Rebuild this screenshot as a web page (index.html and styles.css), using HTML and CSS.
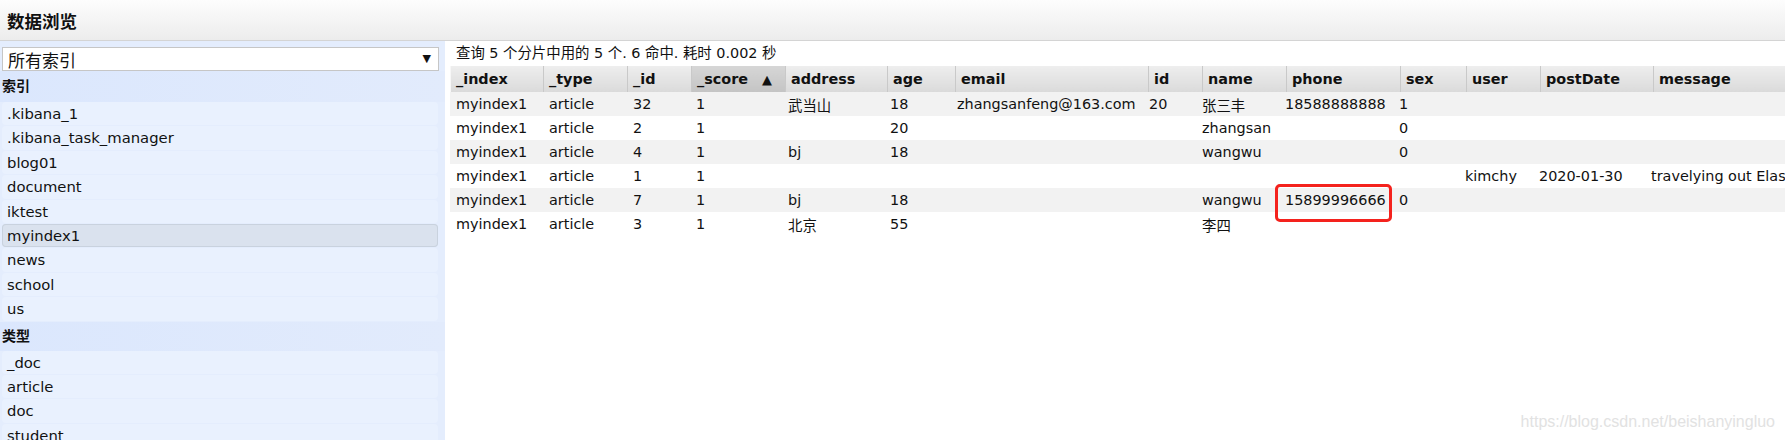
FILE: index.html
```html
<!DOCTYPE html>
<html lang="zh-CN">
<head>
  <meta charset="UTF-8">
  <title>数据浏览</title>
  <link rel="stylesheet" href="styles.css">
</head>
<body>
<div class="top">
  <h1 class="title">数据浏览</h1>
</div>
<div class="page">
  <div class="side">
    <div class="pick"><span class="pickText">所有索引</span><span class="pickArrow">&#9660;</span></div>
    <div class="group first">索引</div>
    <ul class="list">
      <li>.kibana_1</li>
      <li>.kibana_task_manager</li>
      <li>blog01</li>
      <li>document</li>
      <li>iktest</li>
      <li class="on">myindex1</li>
      <li>news</li>
      <li>school</li>
      <li>us</li>
    </ul>
    <div class="group">类型</div>
    <ul class="list">
      <li>_doc</li>
      <li>article</li>
      <li>doc</li>
      <li>student</li>
    </ul>
  </div>
  <div class="main">
    <p class="info">查询 5 个分片中用的 5 个. 6 命中. 耗时 0.002 秒</p>
    <table class="results head">
      <colgroup>
        <col style="width:93px"><col style="width:84px"><col style="width:64px"><col style="width:94px">
        <col style="width:102px"><col style="width:68px"><col style="width:193px"><col style="width:54px">
        <col style="width:84px"><col style="width:114px"><col style="width:66px"><col style="width:74px">
        <col style="width:113px"><col style="width:320px">
      </colgroup>
      <tr>
        <th>_index</th><th>_type</th><th>_id</th><th class="sorted">_score<span class="arrow">&#9650;</span></th>
        <th>address</th><th>age</th><th>email</th><th>id</th><th>name</th><th>phone</th>
        <th>sex</th><th>user</th><th>postDate</th><th>message</th>
      </tr>
    </table>
    <table class="results body">
      <colgroup>
        <col style="width:93px"><col style="width:84px"><col style="width:63px"><col style="width:92px">
        <col style="width:102px"><col style="width:67px"><col style="width:192px"><col style="width:53px">
        <col style="width:83px"><col style="width:114px"><col style="width:66px"><col style="width:74px">
        <col style="width:112px"><col style="width:320px">
      </colgroup>
      <tr>
        <td>myindex1</td><td>article</td><td>32</td><td>1</td><td>武当山</td><td>18</td>
        <td>zhangsanfeng@163.com</td><td>20</td><td>张三丰</td><td>18588888888</td><td>1</td><td></td><td></td><td></td>
      </tr>
      <tr>
        <td>myindex1</td><td>article</td><td>2</td><td>1</td><td></td><td>20</td>
        <td></td><td></td><td>zhangsan</td><td></td><td>0</td><td></td><td></td><td></td>
      </tr>
      <tr>
        <td>myindex1</td><td>article</td><td>4</td><td>1</td><td>bj</td><td>18</td>
        <td></td><td></td><td>wangwu</td><td></td><td>0</td><td></td><td></td><td></td>
      </tr>
      <tr>
        <td>myindex1</td><td>article</td><td>1</td><td>1</td><td></td><td></td>
        <td></td><td></td><td></td><td></td><td></td><td>kimchy</td><td>2020-01-30</td><td>travelying out Elas</td>
      </tr>
      <tr>
        <td>myindex1</td><td>article</td><td>7</td><td>1</td><td>bj</td><td>18</td>
        <td></td><td></td><td>wangwu</td><td class="marked">15899996666<span class="mark"></span></td><td>0</td><td></td><td></td><td></td>
      </tr>
      <tr>
        <td>myindex1</td><td>article</td><td>3</td><td>1</td><td>北京</td><td>55</td>
        <td></td><td></td><td>李四</td><td></td><td></td><td></td><td></td><td></td>
      </tr>
    </table>
  </div>
</div>
<div class="stamp">https://blog.csdn.net/beishanyingluo</div>
</body>
</html>
```

FILE: styles.css
```css
html, body { margin: 0; padding: 0; }
body {
  width: 1785px;
  height: 440px;
  overflow: hidden;
  font: 14.4px "DejaVu Sans", "Noto Sans CJK SC", sans-serif;
  color: #111;
  background: #fff;
  position: relative;
}

.top {
  height: 40px;
  border-bottom: 1px solid #d4d4d4;
  background: linear-gradient(#fdfdfd, #ececec);
  display: flex;
  align-items: center;
  padding-left: 7px;
}
.title { margin: 0; font-size: 17.5px; font-weight: bold; color: #111; }

.page { display: flex; height: 399px; }

/* left column */
.side {
  width: 443px;
  padding: 6px 0 0 2px;
  background: #e4edfd;
  flex: none;
}
.pick {
  height: 22px;
  width: 430px;
  border: 1px solid #c6c6c6;
  background: #fff;
  padding-left: 5px;
  position: relative;
  overflow: hidden;
}
.pickText { display: block; font-size: 17px; line-height: 17px; padding-top: 5px; }
.pickArrow { position: absolute; right: 7px; top: 0; font-size: 11px; line-height: 22px; }
.group {
  height: 29px;
  line-height: 29px;
  margin-left: -2px;
  padding-left: 2px;
  font-weight: bold;
  font-size: 14px;
  background: linear-gradient(90deg, #dbe7fd, #e2ebfc);
}
.group.first { height: 31px; line-height: 30px; }
.list { list-style: none; margin: 0; padding: 0; width: 436px; }
.list li {
  height: 23.4px;
  line-height: 23.4px;
  margin-bottom: 1px;
  padding-left: 5px;
  font-size: 14.8px;
  background: #e9f1fe;
  border-radius: 4px;
}
.list li.on {
  background: #dae2ee;
  box-shadow: inset 0 0 0 1px #c9d2de;
}

/* results */
.main {
  flex: 1;
  padding-left: 5px;
  overflow: hidden;
}
.info { margin: 0; height: 25px; line-height: 24px; padding-left: 6px; font-size: 14.4px; }
.results {
  border-collapse: collapse;
  table-layout: fixed;
  width: 1523px;
}
.results.body { width: 1515px; }
.results th {
  height: 26px;
  padding: 0 4px 0 5px;
  text-align: left;
  font-weight: bold;
  background: linear-gradient(#eeeeee, #dadada);
  border-left: 1px solid #f7f7f7;
  border-right: 1px solid #c9c9c9;
  white-space: nowrap;
}
.results th.sorted { background: linear-gradient(#d6d6d6, #c4c4c4); }
.arrow { margin-left: 14px; font-size: 13px; }
.results td {
  height: 24px;
  padding: 0 4px 0 6px;
  white-space: nowrap;
  overflow: visible;
}
.results tr:nth-child(odd) td { background: #f2f2f2; }

.marked { position: relative; }
.mark {
  position: absolute;
  left: -4px;
  top: -4px;
  width: 111px;
  height: 32px;
  border: 3px solid #f4221d;
  border-radius: 5px;
}

.stamp {
  position: absolute;
  right: 10px;
  bottom: 9px;
  font: 16px "Liberation Sans", Arial, sans-serif;
  color: #e2e2e2;
}
```
